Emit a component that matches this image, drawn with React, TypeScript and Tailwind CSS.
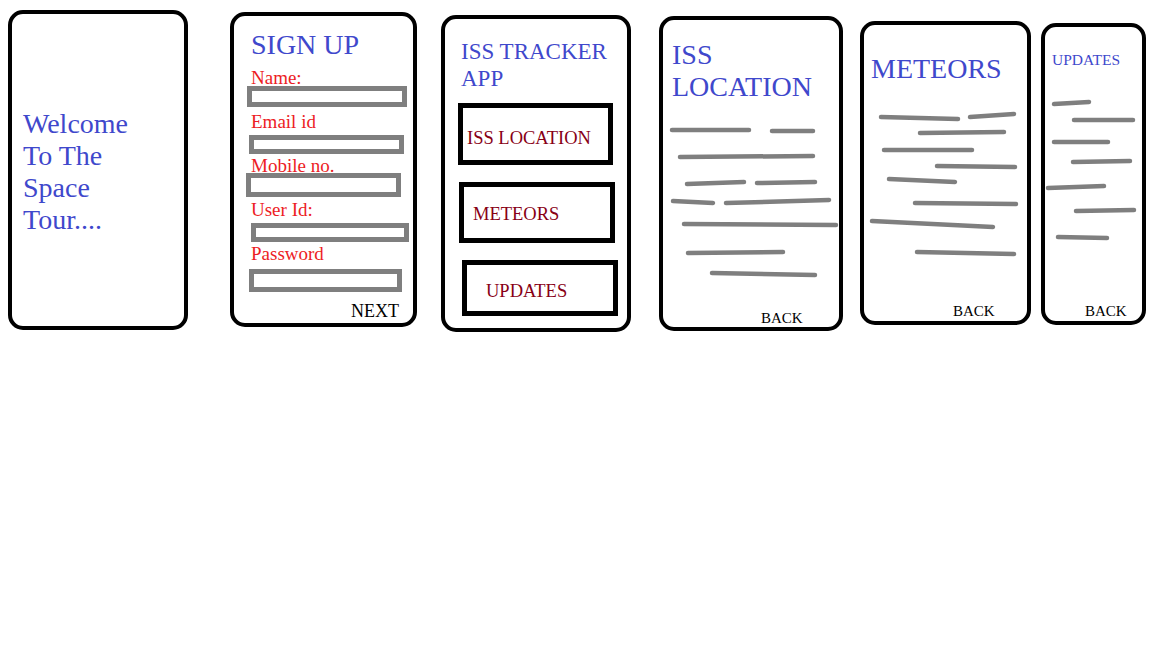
const serif = { fontFamily: '"Liberation Serif", "Times New Roman", serif' };

type Seg = [number, number, number, number];

const issLines: Seg[] = [
  [672, 130, 749, 130],
  [772, 131, 813, 131],
  [680, 157, 813, 156],
  [687, 184, 744, 182],
  [757, 183, 815, 182],
  [673, 201, 713, 203],
  [726, 203, 829, 200],
  [684, 224, 836, 225],
  [688, 253, 783, 252],
  [712, 273, 815, 275],
];

const meteorLines: Seg[] = [
  [881, 117, 958, 119],
  [970, 117, 1014, 114],
  [920, 133, 1004, 132],
  [884, 150, 972, 150],
  [937, 166, 1015, 167],
  [889, 179, 955, 182],
  [915, 203, 1016, 204],
  [872, 221, 993, 227],
  [917, 252, 1014, 254],
];

const updateLines: Seg[] = [
  [1054, 104, 1089, 102],
  [1074, 120, 1133, 120],
  [1054, 142, 1108, 142],
  [1073, 162, 1130, 161],
  [1048, 188, 1104, 186],
  [1076, 211, 1134, 210],
  [1058, 237, 1107, 238],
];

function Scribble({
  lines,
  box,
  className,
}: {
  lines: Seg[];
  box: [number, number, number, number];
  className: string;
}) {
  return (
    <svg
      className={className}
      width={box[2]}
      height={box[3]}
      viewBox={box.join(" ")}
    >
      {lines.map(([x1, y1, x2, y2], i) => (
        <line
          key={i}
          x1={x1}
          y1={y1}
          x2={x2}
          y2={y2}
          stroke="#7f7f7f"
          strokeWidth={4.5}
          strokeLinecap="round"
        />
      ))}
    </svg>
  );
}

const fields = [
  { label: "Name:", labelMt: "mt-[10px]", box: "-mt-[1px] ml-[13px] w-[160px] h-[21px]" },
  { label: "Email id", labelMt: "mt-[6px]", box: "mt-[4px] ml-[15px] w-[155px] h-[19px]" },
  { label: "Mobile no.", labelMt: "mt-[3px]", box: "-mt-[2px] ml-[12px] w-[155px] h-[24px]" },
  { label: "User Id:", labelMt: "mt-[4px]", box: "mt-[4px] ml-[17px] w-[158px] h-[19px]" },
  { label: "Password", labelMt: "mt-[3px]", box: "mt-[6px] ml-[15px] w-[153px] h-[23px]" },
];

export default function App() {
  return (
    <div className="flex h-[648px] w-[1152px] items-start bg-white pl-[8px]" style={serif}>
      {/* welcome */}
      <div className="mt-[10px] h-[320px] w-[180px] rounded-[15px] border-4 border-black">
        <div className="ml-[11px] mt-[94px] text-[28px] leading-[32px] text-[#3f48cc]">
          <div>Welcome</div>
          <div>To The</div>
          <div>Space</div>
          <div>Tour....</div>
        </div>
      </div>

      {/* sign up */}
      <div className="ml-[42px] mt-[12px] flex h-[315px] w-[187px] flex-col rounded-[15px] border-4 border-black">
        <div className="ml-[17px] mt-[15px] text-[28px] leading-[28px] text-[#3f48cc]">SIGN UP</div>
        {fields.map((f) => (
          <div key={f.label} className="flex flex-col">
            <div className={`ml-[17px] ${f.labelMt} text-[19px] leading-[18px] text-[#ed1c24]`}>
              {f.label}
            </div>
            <div className={`${f.box} border-[5px] border-[#7f7f7f]`} />
          </div>
        ))}
        <div className="ml-[117px] mt-[10px] text-[18px] leading-[18px] text-black">NEXT</div>
      </div>

      {/* menu */}
      <div className="ml-[24px] mt-[15px] flex h-[317px] w-[190px] flex-col rounded-[15px] border-4 border-black">
        <div className="ml-[16px] mt-[19px] text-[23px] leading-[27px] text-[#3f48cc]">
          <div>ISS TRACKER</div>
          <div>APP</div>
        </div>
        <div className="ml-[13px] mt-[11px] h-[62px] w-[155px] border-[5px] border-black pl-[4px] pt-[21px] text-[18.5px] leading-[18.5px] text-[#880015]">
          ISS LOCATION
        </div>
        <div className="ml-[14px] mt-[17px] h-[61px] w-[156px] border-[5px] border-black pl-[9px] pt-[18px] text-[18.5px] leading-[18.5px] text-[#880015]">
          METEORS
        </div>
        <div className="ml-[17px] mt-[17px] h-[56px] w-[156px] border-[5px] border-black pl-[19px] pt-[17px] text-[18.5px] leading-[18.5px] text-[#880015]">
          UPDATES
        </div>
      </div>

      {/* iss location */}
      <div className="ml-[28px] mt-[16px] flex h-[315px] w-[184px] flex-col rounded-[15px] border-4 border-black">
        <div className="ml-[9px] mt-[19px] text-[28px] leading-[32px] text-[#3f48cc]">
          <div>ISS</div>
          <div>LOCATION</div>
        </div>
        <Scribble lines={issLines} box={[663, 110, 176, 175]} className="mt-[7px] block" />
        <div className="ml-[98px] mt-[26px] text-[15px] leading-[15px] text-black">BACK</div>
      </div>

      {/* meteors */}
      <div className="ml-[17px] mt-[21px] flex h-[304px] w-[171px] flex-col rounded-[15px] border-4 border-black">
        <div className="ml-[7px] mt-[30px] text-[28px] leading-[28px] text-[#3f48cc]">METEORS</div>
        <Scribble lines={meteorLines} box={[864, 105, 163, 160]} className="mt-[22px] block" />
        <div className="ml-[89px] mt-[39px] text-[15px] leading-[15px] text-black">BACK</div>
      </div>

      {/* updates */}
      <div className="ml-[10px] mt-[23px] flex h-[302px] w-[105px] flex-col rounded-[15px] border-4 border-black">
        <div className="ml-[7px] mt-[25px] text-[15.5px] leading-[16px] text-[#3f48cc]">UPDATES</div>
        <Scribble lines={updateLines} box={[1045, 90, 97, 160]} className="mt-[22px] block" />
        <div className="ml-[40px] mt-[54px] text-[15px] leading-[15px] text-black">BACK</div>
      </div>
    </div>
  );
}
